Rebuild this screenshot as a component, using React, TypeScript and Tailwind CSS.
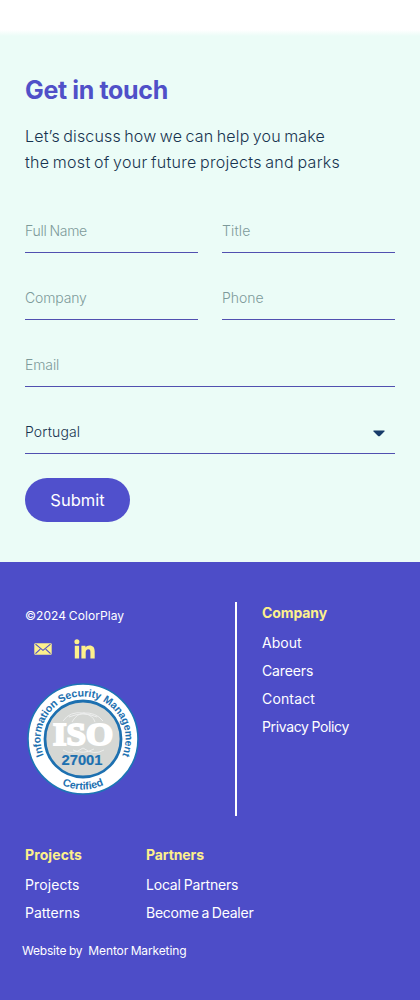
import React from "react";

type FieldProps = { label: string; spacing: string; className?: string };

function Field({ label, spacing, className = "" }: FieldProps) {
  return (
    <label className={`block h-[43px] border-b border-[#5150b0] ${className}`}>
      <input
        type="text"
        placeholder={label}
        className={`block h-10 w-full bg-transparent text-sm font-light text-[#17334f] outline-none placeholder:text-[#7d9a9a] ${spacing}`}
      />
    </label>
  );
}

type LinkItem = { text: string; spacing: string };

function LinkColumn({ title, spacing, links }: { title: string; spacing: string; links: LinkItem[] }) {
  return (
    <div className="whitespace-nowrap text-sm leading-7 text-white">
      <h3 className={`mb-0.5 font-bold text-[#fdf08c] ${spacing}`}>
        <span>{title}</span>
      </h3>
      <ul>
        {links.map((l) => (
          <li key={l.text} className={l.spacing}>
            <a href="#">{l.text}</a>
          </li>
        ))}
      </ul>
    </div>
  );
}

function IsoBadge() {
  return (
    <svg width="114" height="114" viewBox="0 0 114 114" className="block" fontFamily="Liberation Sans, Arial, sans-serif">
      <defs>
        <path id="ringTop" d="M20.2 78.25 A42.5 42.5 0 1 1 93.8 78.25" fill="none" />
        <path id="ringBottom" d="M6.5 57 A50.5 50.5 0 0 0 107.5 57" fill="none" />
      </defs>
      <circle cx="57" cy="57" r="55" fill="#fff" stroke="#1d75b5" strokeWidth="1.6" />
      <circle cx="57" cy="57" r="38" fill="#d5d7d4" stroke="#1d70b0" strokeWidth="2.8" />
      <g fill="none" stroke="#f3f4f4" strokeWidth="1" opacity="0.8">
        <path d="M37 39 Q44 29 57 31 Q70 30 77 39 M43 35 Q57 29 71 35 M46 40 Q51 31 59 31 M57 31 Q67 33 69 40" />
        <path d="M37 68 Q46 74 57 66 Q68 74 78 68 M47 68 Q57 73 68 67" />
      </g>
      <text x="57" y="63.3" textAnchor="middle" textLength="60" lengthAdjust="spacingAndGlyphs" fontFamily="Liberation Serif, serif" fontWeight="700" fontSize="31" fill="#fff" stroke="#fff" strokeWidth="2">ISO</text>
      <text x="56" y="83" textAnchor="middle" textLength="41" lengthAdjust="spacingAndGlyphs" fontWeight="700" fontSize="15.5" fill="#1d70b0" stroke="#1d70b0" strokeWidth="0.2">27001</text>
      <g fontWeight="700" fontSize="10.6" fill="#1d70b0">
        <text letterSpacing="-0.13">
          <textPath href="#ringTop" startOffset="50%" textAnchor="middle">Information Security Management</textPath>
        </text>
        <text>
          <textPath href="#ringBottom" startOffset="50%" textAnchor="middle">Certified</textPath>
        </text>
      </g>
    </svg>
  );
}

export default function App() {
  return (
    <main className="h-[1000px] w-[420px] overflow-hidden bg-[#4d4dc8] font-['Inter',sans-serif]">
      <div className="h-[30px] bg-white" />
      <section className="h-[532px] bg-[#ebfcf7] bg-[linear-gradient(#ffffff,#ebfcf7_6px)] px-[25px] pt-11">
        <h2 className="h-8 whitespace-nowrap text-[25px] font-bold leading-8 tracking-[-0.35px] text-[#5050c8]"><span>Get in touch</span></h2>
        <p className="mt-[17px] whitespace-nowrap text-base font-light leading-[26px] text-[#17334f] [word-spacing:-1.3px]">
          <span className="tracking-[0.17px]">Let’s discuss how we can help you make</span>
          <br />
          <span className="tracking-[0.29px]">the most of your future projects and parks</span>
        </p>
        <form className="mt-[35px]" onSubmit={(e) => e.preventDefault()}>
          <div className="grid grid-cols-2 gap-6">
            <Field label="Full Name" spacing="tracking-[-0.3px] [word-spacing:-0.5px]" />
            <Field label="Title" spacing="tracking-[0.15px]" />
            <Field label="Company" spacing="tracking-[-0.15px]" />
            <Field label="Phone" spacing="tracking-[0px]" />
            <Field label="Email" spacing="tracking-[-0.1px]" className="col-span-2" />
            <div className="col-span-2 flex h-[43px] items-center justify-between border-b border-[#5150b0] pr-[10px]">
              <span className="text-sm font-light tracking-[0.15px] text-[#17334f]">Portugal</span>
              <svg width="12" height="7" viewBox="0 0 12 7" className="mt-0.5">
                <path d="M.6.5h10.8q.4.3 0 .9L7.2 5.8q-1.2 1-2.4 0L.6 1.4Q.2.8.6.5Z" fill="#173b69" />
              </svg>
            </div>
          </div>
          <button type="submit" className="mt-6 h-11 w-[105px] rounded-full bg-[#5050cc] text-[16.5px] text-white"><span>Submit</span></button>
        </form>
      </section>
      <footer className="h-[438px] bg-[#4d4dc8] px-[25px] pt-10 text-white">
        <div className="flex h-[214px]">
          <div className="w-[210px] shrink-0">
            <p className="mt-1 text-xs leading-5 tracking-[0.08px] [word-spacing:-0.8px]"><span>©2024 ColorPlay</span></p>
            <div className="mt-[13px] flex h-5 items-center">
              <svg width="18" height="12" viewBox="0 0 18 12" className="ml-[9px] block">
                <rect x=".3" y=".3" width="17.4" height="11.4" rx="1" fill="#fdf08c" />
                <path d="M1.5 1.2 9 7.4l7.5-6.2M1.5 10.7l4.8-4.6M16.5 10.7l-4.8-4.6" fill="none" stroke="#4d4dc8" strokeWidth="1.1" />
              </svg>
              <svg width="21" height="20" viewBox="0 0 21 20" className="ml-[22px] block" fill="#fdf08c">
                <circle cx="2.9" cy="2.8" r="2.5" />
                <path d="M.8 6.8h4.3v12.8H.8zM7.4 6.8h4.1v1.7c.8-1.3 2-2 3.9-2 4 0 5.3 2.3 5.3 6v7.1h-4.3v-6.2c0-1.9-.4-3.1-2-3.1-1.9 0-2.7 1.3-2.7 3.2v6.1H7.4z" />
              </svg>
            </div>
            <div className="ml-px mt-[23px]"><IsoBadge /></div>
          </div>
          <div className="mr-[25px] w-0.5 bg-white" />
          <div className="-mt-[3px]">
            <LinkColumn
              title="Company"
              spacing="tracking-[-0.1px]"
              links={[
                { text: "About", spacing: "tracking-[0px]" },
                { text: "Careers", spacing: "tracking-[-0.12px]" },
                { text: "Contact", spacing: "tracking-[0.15px]" },
                { text: "Privacy Policy", spacing: "tracking-[-0.37px] [word-spacing:-0.5px]" },
              ]}
            />
          </div>
        </div>
        <div className="mt-[25px] grid grid-cols-[121px_1fr]">
          <LinkColumn
            title="Projects"
            spacing="tracking-[0.1px]"
            links={[
              { text: "Projects", spacing: "tracking-[0.1px]" },
              { text: "Patterns", spacing: "tracking-[0px]" },
            ]}
          />
          <LinkColumn
            title="Partners"
            spacing="tracking-[-0.1px]"
            links={[
              { text: "Local Partners", spacing: "tracking-[-0.2px] [word-spacing:-0.6px]" },
              { text: "Become a Dealer", spacing: "tracking-[-0.25px] [word-spacing:-0.9px]" },
            ]}
          />
        </div>
        <p className="-ml-[3px] mt-[14px] flex gap-1.5 whitespace-nowrap text-xs leading-5">
          <span className="tracking-[-0.2px] [word-spacing:-0.5px]">Website by</span>
          <a href="#" className="tracking-[-0.12px] [word-spacing:-0.7px]">Mentor Marketing</a>
        </p>
      </footer>
    </main>
  );
}
